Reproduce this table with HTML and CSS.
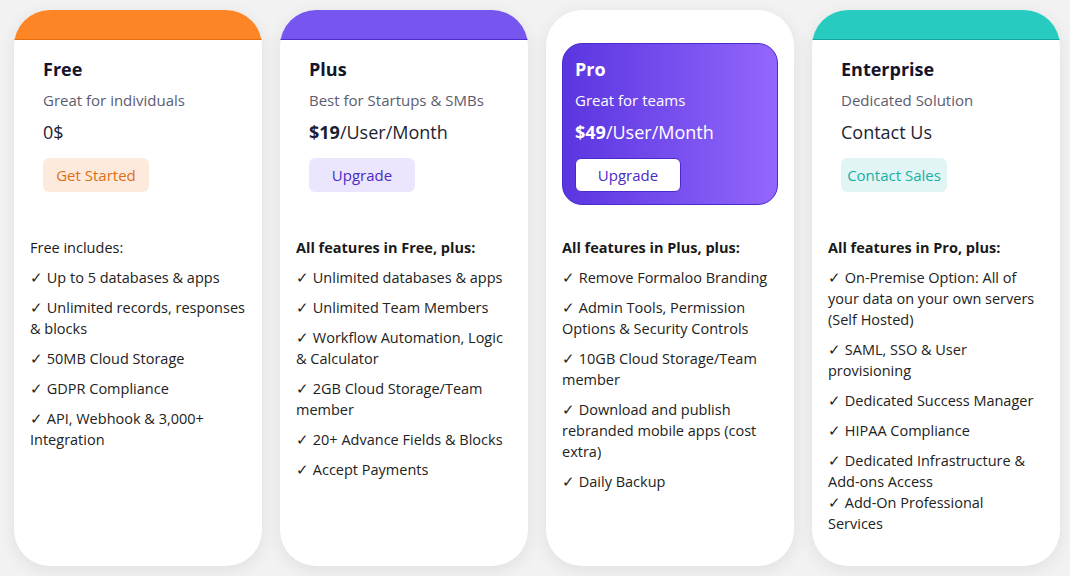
FILE: index.html
```html
<!DOCTYPE html>
<html lang="en">
<head>
    <meta charset="UTF-8">
    <meta name="viewport" content="width=device-width, initial-scale=1.0">
    <title>Pricing Plans</title>
    <link rel="stylesheet" href="styles.css">
</head>
<body>

    <div class="plans">

        <!-- Free -->
        <div class="plan free">
            <div class="band"></div>
            <div class="plan-head">
                <h2>Free</h2>
                <p class="tagline">Great for individuals</p>
                <p class="price">0$</p>
                <button class="btn">Get Started</button>
            </div>
            <div class="features">
                <p class="features-title light">Free includes:</p>
                <ul>
                    <li>✓ Up to 5 databases &amp; apps</li>
                    <li>✓ Unlimited records, responses<br>&amp; blocks</li>
                    <li>✓ 50MB Cloud Storage</li>
                    <li>✓ GDPR Compliance</li>
                    <li>✓ API, Webhook &amp; 3,000+<br>Integration</li>
                </ul>
            </div>
        </div>

        <!-- Plus -->
        <div class="plan plus">
            <div class="band"></div>
            <div class="plan-head">
                <h2>Plus</h2>
                <p class="tagline">Best for Startups &amp; SMBs</p>
                <p class="price"><b>$19</b>/User/Month</p>
                <button class="btn">Upgrade</button>
            </div>
            <div class="features">
                <p class="features-title">All features in Free, plus:</p>
                <ul>
                    <li>✓ Unlimited databases &amp; apps</li>
                    <li>✓ Unlimited Team Members</li>
                    <li>✓ Workflow Automation, Logic<br>&amp; Calculator</li>
                    <li>✓ 2GB Cloud Storage/Team<br>member</li>
                    <li>✓ 20+ Advance Fields &amp; Blocks</li>
                    <li>✓ Accept Payments</li>
                </ul>
            </div>
        </div>

        <!-- Pro (highlighted) -->
        <div class="plan pro">
            <div class="band"></div>
            <div class="plan-head">
                <h2>Pro</h2>
                <p class="tagline">Great for teams</p>
                <p class="price"><b>$49</b>/User/Month</p>
                <button class="btn">Upgrade</button>
            </div>
            <div class="features">
                <p class="features-title">All features in Plus, plus:</p>
                <ul>
                    <li>✓ Remove Formaloo Branding</li>
                    <li>✓ Admin Tools, Permission<br>Options &amp; Security Controls</li>
                    <li>✓ 10GB Cloud Storage/Team<br>member</li>
                    <li>✓ Download and publish<br>rebranded mobile apps (cost<br>extra)</li>
                    <li>✓ Daily Backup</li>
                </ul>
            </div>
        </div>

        <!-- Enterprise -->
        <div class="plan enterprise">
            <div class="band"></div>
            <div class="plan-head">
                <h2>Enterprise</h2>
                <p class="tagline">Dedicated Solution</p>
                <p class="price">Contact Us</p>
                <button class="btn">Contact Sales</button>
            </div>
            <div class="features">
                <p class="features-title">All features in Pro, plus:</p>
                <ul>
                    <li>✓ On-Premise Option: All of<br>your data on your own servers<br>(Self Hosted)</li>
                    <li>✓ SAML, SSO &amp; User<br>provisioning</li>
                    <li>✓ Dedicated Success Manager</li>
                    <li>✓ HIPAA Compliance</li>
                    <li>✓ Dedicated Infrastructure &amp;<br>Add-ons Access<br>✓ Add-On Professional<br>Services</li>
                </ul>
            </div>
        </div>

    </div>

</body>
</html>
```

FILE: styles.css
```css
* {
    margin: 0;
    padding: 0;
    box-sizing: border-box;
    font-family: "Open Sans", Arial, sans-serif;
}

body {
    background: #f2f2f2;
    color: #222;
    height: 100vh;
    padding: 10px 10px 10px 14px;
}

.plans {
    display: grid;
    grid-template-columns: repeat(4, 248px);
    gap: 18px;
    height: 100%;
}

.plan {
    background: #fff;
    border-radius: 36px;
    overflow: hidden;
    box-shadow: 0 4px 18px rgba(0, 0, 0, 0.08);
}

.band {
    height: 30px;
    border-bottom: 1px solid transparent;
}

.free .band {
    background: #fd8525;
    border-color: #e3700f;
}

.plus .band {
    background: #7656ef;
    border-color: #4f2fd0;
}

.enterprise .band {
    background: #27cbc0;
    border-color: #12a89e;
}

/* Header block */
.plan-head {
    margin: 3px 16px 0;
    padding: 13px 12px 12px;
    border-radius: 20px;
    border: 1px solid transparent;
}

.plan-head h2 {
    font-size: 18px;
    line-height: 24px;
    font-weight: 700;
    color: #14142b;
}

.tagline {
    margin-top: 9px;
    font-size: 15px;
    line-height: 20px;
    color: #5c5c70;
}

.price {
    margin-top: 10px;
    font-size: 18px;
    line-height: 24px;
    color: #1e1e32;
}

.price b {
    font-weight: 700;
}

.btn {
    display: block;
    margin-top: 14px;
    width: 106px;
    height: 34px;
    border: none;
    border-radius: 6px;
    font-size: 15px;
    cursor: pointer;
}

.free .btn {
    background: #fdeadd;
    color: #dd6f12;
}

.plus .btn {
    background: #ebe6fd;
    color: #4a29c6;
}

.enterprise .btn {
    background: #e1f5f4;
    color: #16b0a6;
}

/* Pro highlight */
.pro .plan-head {
    background: linear-gradient(to right, #5a35e0, #9367fc);
    border-color: #4a28cc;
}

.pro .plan-head h2,
.pro .tagline,
.pro .price {
    color: #fff;
}

.pro .btn {
    background: #fff;
    color: #4a29c6;
    border: 1px solid #4a28cc;
}

/* Feature list */
.features {
    padding: 32px 16px 0;
    font-size: 14.5px;
    line-height: 21px;
}

.features-title {
    font-weight: 700;
    color: #1a1a1a;
}

.features-title.light {
    font-weight: 400;
}

.features ul {
    list-style: none;
    margin-top: 9px;
}

.features li {
    margin-bottom: 9px;
    white-space: nowrap;
}
```
